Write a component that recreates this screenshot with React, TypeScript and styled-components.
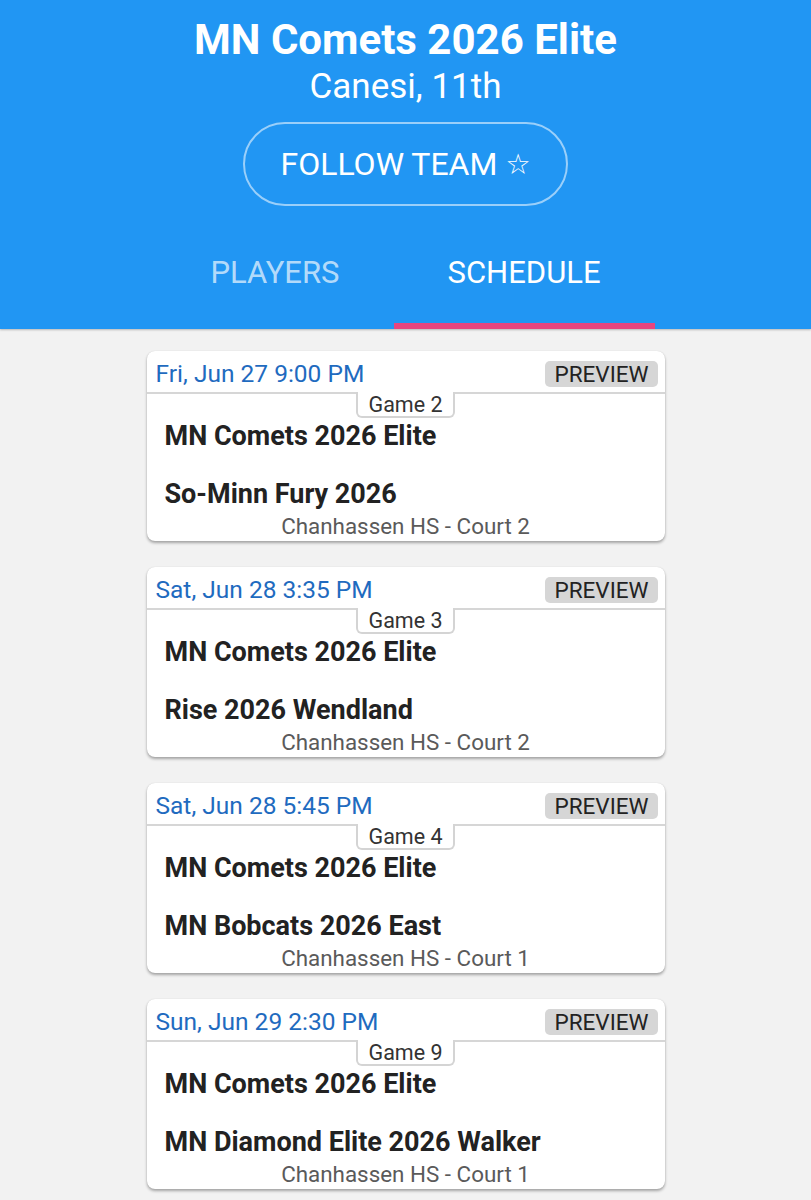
import React from 'react';
import styled, { createGlobalStyle } from 'styled-components';

const GlobalStyle = createGlobalStyle`
  * {
    box-sizing: border-box;
  }
  body {
    margin: 0;
    background: #f2f2f2;
    font-family: Roboto, 'DejaVu Sans', sans-serif;
  }
`;

const Header = styled.header`
  background: #2196f3;
  color: #fff;
  display: flex;
  flex-direction: column;
  align-items: center;
  padding-top: 15px;
  box-shadow: 0 1px 2px rgba(0, 0, 0, 0.25);
`;

const Title = styled.h1`
  margin: 0;
  font-size: 42px;
  line-height: 50px;
  font-weight: 700;
`;

const Subtitle = styled.div`
  font-size: 35px;
  line-height: 44px;
`;

const FollowButton = styled.button`
  margin-top: 13px;
  width: 325px;
  height: 84px;
  border: 2px solid rgba(255, 255, 255, 0.55);
  border-radius: 42px;
  background: transparent;
  color: #fff;
  font-family: Roboto, 'DejaVu Sans', sans-serif;
  font-size: 32px;
  display: flex;
  align-items: center;
  justify-content: center;
  gap: 8px;
`;

const Star = styled.span`
  font-family: 'DejaVu Sans', sans-serif;
  font-size: 28px;
`;

const TabBar = styled.nav`
  margin-top: 16px;
  display: flex;
  justify-content: center;
`;

const Tab = styled.div<{ $active?: boolean }>`
  height: 107px;
  padding: 0 54px;
  display: flex;
  align-items: center;
  font-size: 31px;
  color: ${({ $active }) => ($active ? '#fff' : 'rgba(255, 255, 255, 0.68)')};
  border-bottom: 6px solid ${({ $active }) => ($active ? '#e8457f' : 'transparent')};
`;

const List = styled.main`
  display: flex;
  flex-direction: column;
  align-items: center;
  gap: 26px;
  padding: 22px 0 30px;
`;

const Card = styled.section`
  width: 518px;
  height: 190px;
  background: #fff;
  border-radius: 8px;
  box-shadow: 0 2px 3px rgba(0, 0, 0, 0.32), 0 0 1px rgba(0, 0, 0, 0.15);
  overflow: hidden;
`;

const DateRow = styled.div`
  height: 43px;
  padding: 4px 7px 0 9px;
  display: flex;
  align-items: center;
  justify-content: space-between;
  border-bottom: 2px solid #d6d6d6;
`;

const DateText = styled.span`
  font-size: 24.5px;
  line-height: 30px;
  color: #1f6bbf;
`;

const Badge = styled.span`
  height: 26px;
  padding: 0 9px;
  border-radius: 5px;
  background: #d6d6d6;
  color: #222;
  font-size: 22.5px;
  line-height: 27px;
`;

const Body = styled.div`
  display: flex;
  flex-direction: column;
`;

const GameTab = styled.div`
  align-self: center;
  margin-top: -2px;
  width: 99px;
  height: 26px;
  background: #fff;
  border: 2px solid #d4d4d4;
  border-top: none;
  border-radius: 0 0 6px 6px;
  display: flex;
  align-items: center;
  justify-content: center;
  font-size: 21.5px;
  color: #333;
`;

const Team = styled.div<{ $second?: boolean }>`
  margin-top: ${({ $second }) => ($second ? '22px' : '0')};
  padding-left: 18px;
  font-size: 27px;
  line-height: 36px;
  font-weight: 700;
  color: #222;
`;

const Location = styled.div`
  text-align: center;
  font-size: 22.4px;
  line-height: 28px;
  color: #5a5a5a;
`;

interface Game {
  date: string;
  number: number;
  home: string;
  away: string;
  court: string;
}

const games: Game[] = [
  { date: 'Fri, Jun 27 9:00 PM', number: 2, home: 'MN Comets 2026 Elite', away: 'So-Minn Fury 2026', court: 'Chanhassen HS - Court 2' },
  { date: 'Sat, Jun 28 3:35 PM', number: 3, home: 'MN Comets 2026 Elite', away: 'Rise 2026 Wendland', court: 'Chanhassen HS - Court 2' },
  { date: 'Sat, Jun 28 5:45 PM', number: 4, home: 'MN Comets 2026 Elite', away: 'MN Bobcats 2026 East', court: 'Chanhassen HS - Court 1' },
  { date: 'Sun, Jun 29 2:30 PM', number: 9, home: 'MN Comets 2026 Elite', away: 'MN Diamond Elite 2026 Walker', court: 'Chanhassen HS - Court 1' }
];

const App: React.FC = () => (
  <>
    <GlobalStyle />
    <Header>
      <Title>MN Comets 2026 Elite</Title>
      <Subtitle>Canesi, 11th</Subtitle>
      <FollowButton>
        FOLLOW TEAM <Star>☆</Star>
      </FollowButton>
      <TabBar>
        <Tab>PLAYERS</Tab>
        <Tab $active>SCHEDULE</Tab>
      </TabBar>
    </Header>
    <List>
      {games.map((g) => (
        <Card key={g.number}>
          <DateRow>
            <DateText>{g.date}</DateText>
            <Badge>PREVIEW</Badge>
          </DateRow>
          <Body>
            <GameTab>Game {g.number}</GameTab>
            <Team>{g.home}</Team>
            <Team $second>{g.away}</Team>
            <Location>{g.court}</Location>
          </Body>
        </Card>
      ))}
    </List>
  </>
);

export default App;
